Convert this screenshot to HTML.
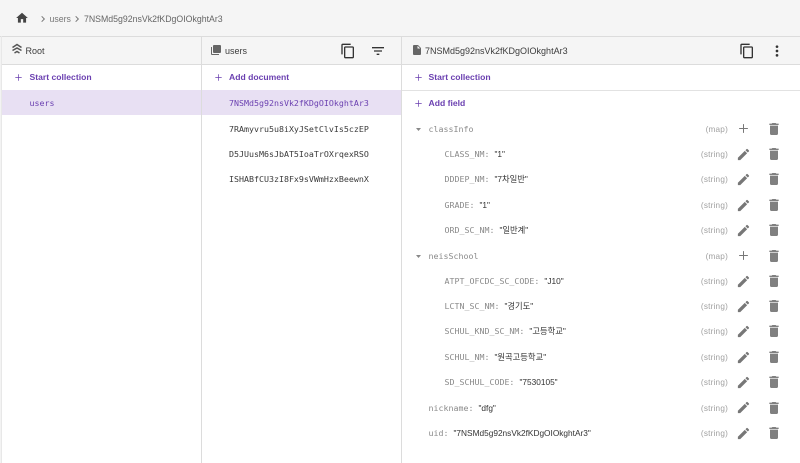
<!DOCTYPE html>
<html><head><meta charset="utf-8"><style>
html,body{margin:0;padding:0;background:#fff}
#p{position:relative;width:800px;height:463px;overflow:hidden;background:#fff;font-family:"Liberation Sans","Noto Sans CJK KR",sans-serif;color:#444;filter:blur(.35px)}
#p div{position:absolute}
.t{white-space:nowrap;line-height:14px;height:14px}
.s{font-size:8.75px;color:#666}
.h{font-size:9px;color:#3c3c3c}
.b{font-size:8.6px;font-weight:bold;color:#6a3fb0}
.m{font-family:"DejaVu Sans Mono",monospace;font-size:8.3px;color:#3a3a3a}
.k{font-family:"DejaVu Sans Mono",monospace;font-size:8.3px;color:#8a8a8a}
.k span{font-family:"Liberation Sans","Noto Sans CJK KR",sans-serif;font-size:8.3px;color:#333}
.ty{font-size:8.2px;color:#a0a0a0;right:72px;left:auto;letter-spacing:.2px}
svg{position:absolute;display:block}
</style></head><body><div id="p">
<svg width="0" height="0"><defs>
<symbol id="pl" viewBox="0 0 24 24"><path d="M19 12.800h-6.200V19h-1.600v-6.200H5v-1.600h6.200V5h1.600v6.200H19v1.600z"/></symbol>
<symbol id="pe" viewBox="0 0 24 24"><path d="M3 17.250V21h3.750L17.810 9.940l-3.750-3.750L3 17.250zM20.710 7.040a1 1 0 000-1.410l-2.340-2.340a1 1 0 00-1.410 0l-1.830 1.830 3.750 3.750 1.830-1.830z"/></symbol>
<symbol id="tr" viewBox="0 0 24 24"><path d="M6 19c0 1.100.9 2 2 2h8c1.100 0 2-.9 2-2V7H6v12zM19 4h-3.500l-1-1h-5l-1 1H5v2h14V4z"/></symbol>
<symbol id="co" viewBox="0 0 24 24"><path d="M16 1H4c-1.100 0-2 .9-2 2v14h2V3h12V1zm3 4H8c-1.100 0-2 .9-2 2v14c0 1.100.9 2 2 2h11c1.100 0 2-.9 2-2V7c0-1.100-.9-2-2-2zm0 16H8V7h11v14z"/></symbol>
</defs></svg>

<!-- chrome -->
<div style="left:0;top:0;width:800px;height:36px;background:#f5f5f5"></div>
<div style="left:0;top:36px;width:800px;height:1px;background:#dcdcdc"></div>
<div style="left:0;top:37px;width:2px;height:426px;background:#f3f3f3"></div>
<div style="left:2px;top:37px;width:798px;height:27px;background:#f5f5f5"></div>
<div style="left:2px;top:64px;width:798px;height:1px;background:#dcdcdc"></div>
<div style="left:1px;top:36px;width:1px;height:427px;background:#e8e8e8"></div>
<div style="left:201px;top:37px;width:1px;height:426px;background:#dcdcdc"></div>
<div style="left:401px;top:37px;width:1px;height:426px;background:#dcdcdc"></div>

<!-- breadcrumb -->
<svg style="left:14.500px;top:11px" width="14" height="14" viewBox="0 0 24 24" fill="#444"><path d="M10 20v-6h4v6h5v-8h3L12 3 2 12h3v8z"/></svg>
<svg style="left:39px;top:15px" width="8" height="8" viewBox="0 0 24 24" fill="none" stroke="#777" stroke-width="3"><path d="M8 4l8 8-8 8"/></svg>
<div class="t s" style="left:49.500px;top:12px;color:#777">users</div>
<svg style="left:73px;top:15px" width="8" height="8" viewBox="0 0 24 24" fill="none" stroke="#777" stroke-width="3"><path d="M8 4l8 8-8 8"/></svg>
<div class="t s" style="left:84px;top:12px">7NSMd5g92nsVk2fKDgOIOkghtAr3</div>

<!-- headers -->
<svg style="left:11px;top:43px" width="12" height="12" viewBox="0 0 24 24" fill="none" stroke="#555" stroke-width="3"><path d="M3 9l9-6 9 6M3 15l9-5 9 5M7 20l5-3 5 3"/></svg>
<div class="t h" style="left:25.500px;top:44px">Root</div>
<svg style="left:210px;top:43.500px" width="12" height="12" viewBox="0 0 24 24" fill="#666"><path d="M4 6H2v14c0 1.100.9 2 2 2h14v-2H4V6zm16-4H8c-1.100 0-2 .9-2 2v12c0 1.100.9 2 2 2h12c1.100 0 2-.9 2-2V4c0-1.100-.9-2-2-2z"/></svg>
<div class="t h" style="left:225px;top:44px">users</div>
<svg style="left:340px;top:43px;fill:#333" width="16" height="16"><use href="#co"/></svg>
<svg style="left:370px;top:43px" width="16" height="16" viewBox="0 0 24 24" fill="#333"><path d="M10 18h4v-2h-4v2zM3 6v2h18V6H3zm3 7h12v-2H6v2z"/></svg>
<svg style="left:410.500px;top:43.500px" width="12" height="12" viewBox="0 0 24 24" fill="#666"><path d="M14 2H6c-1.100 0-2 .9-2 2v16c0 1.100.9 2 2 2h12c1.100 0 2-.9 2-2V8l-6-6zm-1 7V3.500L18.500 9H13z"/></svg>
<div class="t h" style="left:425px;top:44px">7NSMd5g92nsVk2fKDgOIOkghtAr3</div>
<svg style="left:738.500px;top:43px;fill:#333" width="16" height="16"><use href="#co"/></svg>
<svg style="left:768.500px;top:43px" width="16" height="16" viewBox="0 0 24 24" fill="#333"><circle cx="12" cy="5.500" r="2"/><circle cx="12" cy="12" r="2"/><circle cx="12" cy="18.500" r="2"/></svg>

<!-- col 1 -->
<svg style="left:13px;top:72px;fill:#6a3fb0" width="11" height="11"><use href="#pl"/></svg>
<div class="t b" style="left:29.500px;top:70px">Start collection</div>
<div style="left:2px;top:90px;width:199px;height:25px;background:#e8e0f3"></div>
<div class="t m" style="left:29.500px;top:96px;color:#6a3fb0">users</div>

<!-- col 2 -->
<svg style="left:213px;top:72px;fill:#6a3fb0" width="11" height="11"><use href="#pl"/></svg>
<div class="t b" style="left:229px;top:70px">Add document</div>
<div style="left:202px;top:90px;width:199px;height:25px;background:#e8e0f3"></div>
<div class="t m" style="left:229px;top:96px;color:#6a3fb0">7NSMd5g92nsVk2fKDgOIOkghtAr3</div>
<div class="t m" style="left:229px;top:121.500px">7RAmyvru5u8iXyJSetClvIs5czEP</div>
<div class="t m" style="left:229px;top:146.500px">D5JUusM6sJbAT5IoaTrOXrqexRSO</div>
<div class="t m" style="left:229px;top:171.500px">ISHABfCU3zI8Fx9sVWmHzxBeewnX</div>

<!-- col 3 -->
<svg style="left:413px;top:72px;fill:#6a3fb0" width="11" height="11"><use href="#pl"/></svg>
<div class="t b" style="left:428.500px;top:70px">Start collection</div>
<div style="left:402px;top:90px;width:398px;height:1px;background:#e2e2e2"></div>
<svg style="left:413px;top:98px;fill:#6a3fb0" width="11" height="11"><use href="#pl"/></svg>
<div class="t b" style="left:428.500px;top:96px">Add field</div>

<svg style="left:415.500px;top:127.500px" width="5" height="3" fill="#888"><path d="M0 0h5L2.500 3z"/></svg>
<svg style="left:415.500px;top:254.500px" width="5" height="3" fill="#888"><path d="M0 0h5L2.500 3z"/></svg>

<div class="t k" style="left:428.500px;top:122px">classInfo</div>
<div class="t k" style="left:444.500px;top:147px">CLASS_NM: <span>"1"</span></div>
<div class="t k" style="left:444.500px;top:172px">DDDEP_NM: <span>"7차일반"</span></div>
<div class="t k" style="left:444.500px;top:198px">GRADE: <span>"1"</span></div>
<div class="t k" style="left:444.500px;top:223px">ORD_SC_NM: <span>"일반계"</span></div>
<div class="t k" style="left:428.500px;top:249px">neisSchool</div>
<div class="t k" style="left:444.500px;top:274px">ATPT_OFCDC_SC_CODE: <span>"J10"</span></div>
<div class="t k" style="left:444.500px;top:299px">LCTN_SC_NM: <span>"경기도"</span></div>
<div class="t k" style="left:444.500px;top:324px">SCHUL_KND_SC_NM: <span>"고등학교"</span></div>
<div class="t k" style="left:444.500px;top:350px">SCHUL_NM: <span>"원곡고등학교"</span></div>
<div class="t k" style="left:444.500px;top:375px">SD_SCHUL_CODE: <span>"7530105"</span></div>
<div class="t k" style="left:428.500px;top:401px">nickname: <span>"dfg"</span></div>
<div class="t k" style="left:428.500px;top:426px">uid: <span>"7NSMd5g92nsVk2fKDgOIOkghtAr3"</span></div>

<div class="t ty" style="top:122.500px">(map)</div>
<div class="t ty" style="top:147.500px">(string)</div>
<div class="t ty" style="top:172.500px">(string)</div>
<div class="t ty" style="top:198.500px">(string)</div>
<div class="t ty" style="top:223.500px">(string)</div>
<div class="t ty" style="top:249.500px">(map)</div>
<div class="t ty" style="top:274.500px">(string)</div>
<div class="t ty" style="top:299.500px">(string)</div>
<div class="t ty" style="top:324.500px">(string)</div>
<div class="t ty" style="top:350.500px">(string)</div>
<div class="t ty" style="top:375.500px">(string)</div>
<div class="t ty" style="top:401.500px">(string)</div>
<div class="t ty" style="top:426.500px">(string)</div>

<svg style="left:736px;top:121px;fill:#777" width="15" height="15"><use href="#pl"/></svg>
<svg style="left:736px;top:147px;fill:#777" width="15" height="15"><use href="#pe"/></svg>
<svg style="left:736px;top:172px;fill:#777" width="15" height="15"><use href="#pe"/></svg>
<svg style="left:736px;top:198px;fill:#777" width="15" height="15"><use href="#pe"/></svg>
<svg style="left:736px;top:223px;fill:#777" width="15" height="15"><use href="#pe"/></svg>
<svg style="left:736px;top:248px;fill:#777" width="15" height="15"><use href="#pl"/></svg>
<svg style="left:736px;top:274px;fill:#777" width="15" height="15"><use href="#pe"/></svg>
<svg style="left:736px;top:299px;fill:#777" width="15" height="15"><use href="#pe"/></svg>
<svg style="left:736px;top:324px;fill:#777" width="15" height="15"><use href="#pe"/></svg>
<svg style="left:736px;top:350px;fill:#777" width="15" height="15"><use href="#pe"/></svg>
<svg style="left:736px;top:375px;fill:#777" width="15" height="15"><use href="#pe"/></svg>
<svg style="left:736px;top:400px;fill:#777" width="15" height="15"><use href="#pe"/></svg>
<svg style="left:736px;top:426px;fill:#777" width="15" height="15"><use href="#pe"/></svg>

<svg style="left:766px;top:121px;fill:#808080" width="16" height="16"><use href="#tr"/></svg>
<svg style="left:766px;top:146px;fill:#808080" width="16" height="16"><use href="#tr"/></svg>
<svg style="left:766px;top:171px;fill:#808080" width="16" height="16"><use href="#tr"/></svg>
<svg style="left:766px;top:197px;fill:#808080" width="16" height="16"><use href="#tr"/></svg>
<svg style="left:766px;top:222px;fill:#808080" width="16" height="16"><use href="#tr"/></svg>
<svg style="left:766px;top:248px;fill:#808080" width="16" height="16"><use href="#tr"/></svg>
<svg style="left:766px;top:273px;fill:#808080" width="16" height="16"><use href="#tr"/></svg>
<svg style="left:766px;top:298px;fill:#808080" width="16" height="16"><use href="#tr"/></svg>
<svg style="left:766px;top:323px;fill:#808080" width="16" height="16"><use href="#tr"/></svg>
<svg style="left:766px;top:349px;fill:#808080" width="16" height="16"><use href="#tr"/></svg>
<svg style="left:766px;top:374px;fill:#808080" width="16" height="16"><use href="#tr"/></svg>
<svg style="left:766px;top:400px;fill:#808080" width="16" height="16"><use href="#tr"/></svg>
<svg style="left:766px;top:425px;fill:#808080" width="16" height="16"><use href="#tr"/></svg>
</div></body></html>
